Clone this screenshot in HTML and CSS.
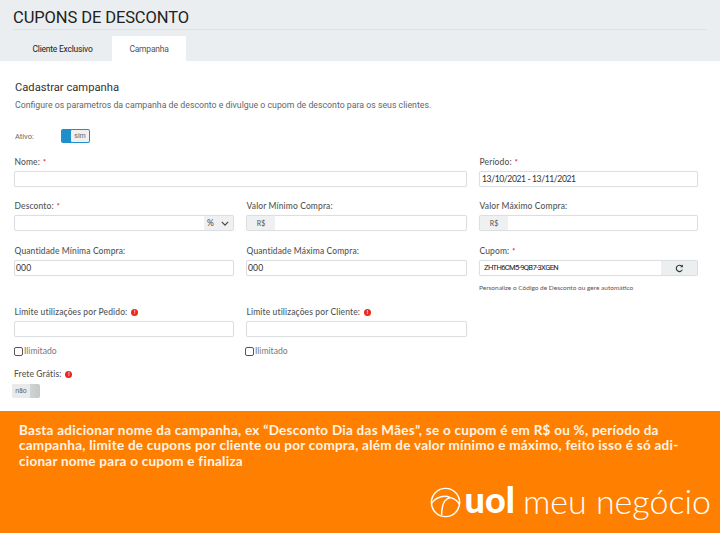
FILE: index.html
```html
<!DOCTYPE html>
<html lang="pt-BR">
<head>
<meta charset="utf-8">
<title>Cupons de Desconto</title>
<link rel="stylesheet" href="styles.css">
</head>
<body>
<header class="top">
  <h1 class="title">CUPONS DE DESCONTO</h1>
  <nav class="tabs">
    <span class="tab">Cliente Exclusivo</span>
    <span class="tab tab-active">Campanha</span>
  </nav>
</header>
<main class="content">
  <h2 class="heading">Cadastrar campanha</h2>
  <p class="lead">Configure os parametros da campanha de desconto e divulgue o cupom de desconto para os seus clientes.</p>
  <div class="active-row">
    <span class="active-label">Ativo:</span>
    <span class="toggle toggle-on"><span class="knob">sim</span></span>
  </div>
  <form class="form">
    <div class="field span2 row-a"><label class="lbl">Nome: <i class="req">*</i></label><div class="box"></div></div>
    <div class="field row-a col3"><label class="lbl">Período: <i class="req">*</i></label><div class="box box-text">13/10/2021 - 13/11/2021</div></div>

    <div class="field row-b"><label class="lbl">Desconto: <i class="req">*</i></label>
      <div class="box box-group"><span class="grow"></span><span class="select">%<svg class="chev" viewBox="0 0 10 6" width="8" height="5"><path d="M1 1l4 4 4-4" fill="none" stroke="#444" stroke-width="1.4"/></svg></span></div></div>
    <div class="field row-b"><label class="lbl">Valor Mínimo Compra:</label><div class="box box-group"><span class="addon">R$</span></div></div>
    <div class="field row-b"><label class="lbl">Valor Máximo Compra:</label><div class="box box-group"><span class="addon">R$</span></div></div>

    <div class="field row-c"><label class="lbl">Quantidade Mínima Compra:</label><div class="box box-text">000</div></div>
    <div class="field row-c"><label class="lbl">Quantidade Máxima Compra:</label><div class="box box-text">000</div></div>
    <div class="field row-c"><label class="lbl">Cupom: <i class="req">*</i></label>
      <div class="box box-group"><span class="grow code">ZHTH6CM5-9QB7-3XGEN</span><span class="refresh"><svg viewBox="0 0 12 12" width="9" height="9"><path d="M9.8 7.5A4.2 4.2 0 1 1 9 3" fill="none" stroke="#333" stroke-width="1.5"/><path d="M10.5 0.8v3.6H7z" fill="#333"/></svg></span></div>
      <p class="hint">Personalize o Código de Desconto ou gere automático</p></div>

    <div class="field row-d"><label class="lbl">Limite utilizações por Pedido: <b class="info">!</b></label><div class="box"></div>
      <label class="check"><span class="cb"></span>Ilimitado</label></div>
    <div class="field row-d"><label class="lbl">Limite utilizações por Cliente: <b class="info">!</b></label><div class="box"></div>
      <label class="check check-shift"><span class="cb"></span>Ilimitado</label></div>
  </form>
  <div class="free">
    <div class="lbl">Frete Grátis: <b class="info">!</b></div>
    <span class="toggle toggle-off"><span class="knob knob-off">não</span></span>
  </div>
</main>
<footer class="banner">
  <p class="banner-text">Basta adicionar nome da campanha, ex “Desconto Dia das Mães”, se o cupom é em R$ ou %, período da<br>campanha, limite de cupons por cliente ou por compra, além de valor mínimo e máximo, feito isso é só adi-<br>cionar nome para o cupom e finaliza</p>
  <div class="logo">
    <svg class="globe" viewBox="0 0 32 32" width="31" height="31"><circle cx="16" cy="16" r="14.6" fill="none" stroke="#fff" stroke-width="1.5"/><path d="M1.6 17C6 10 15 8 21 11c-6 1-9 6-9 18" fill="none" stroke="#fff" stroke-width="1.5"/><path d="M21 11c4 1 8 4 9.4 7" fill="none" stroke="#fff" stroke-width="1.5"/></svg>
    <span class="uol">uol</span><span class="meu">meu negócio</span>
  </div>
</footer>
</body>
</html>
```
FILE: styles.css
```css
* { box-sizing: border-box; }
html, body { margin: 0; padding: 0; }
body { width: 720px; height: 533px; overflow: hidden; background: #fff; font-family: "Lato", sans-serif; color: #555; display: flex; flex-direction: column; }
.top { height: 61px; background: #ebeef0; padding: 0 13px; display: flex; flex-direction: column; }
.title { margin: 0; height: 30px; padding-top: 9px; border-bottom: 1px solid #dfe2e4; font: 400 16.5px/18px "Roboto", sans-serif; color: #222; letter-spacing: -0.1px; }
.tabs { display: flex; margin-top: 6px; height: 25px; }
.tab { width: 99px; display: flex; align-items: center; justify-content: center; font: 400 8.5px "Roboto", sans-serif; letter-spacing: -.22px; color: #222; }
.tab-active { width: 74px; background: #fff; color: #555; }
.content { height: 350px; padding: 20px 14px 0 15px; }
.heading { margin: 0; font: 400 11.2px/14px "Roboto", sans-serif; color: #333; }
.lead { margin: 4px 0 0; font: 400 8.75px/12px "Roboto", sans-serif; color: #666; }
.active-row { display: flex; align-items: center; margin: 17px 0 0 0; height: 15px; }
.active-label { width: 46px; padding-top: 2px; font: 400 7.5px "Roboto", sans-serif; color: #666; }
.toggle { display: flex; width: 29px; height: 14px; border-radius: 2px; align-items: center; }
.toggle-on { background: #1f8fc9; justify-content: flex-end; padding: 1px; }
.knob { width: 18px; height: 12px; background: #eef0f1; font: 400 7px/12px "Roboto", sans-serif; text-align: center; color: #666; border-radius: 1px; }
.toggle-off { width: 28px; height: 14px; margin-left: -2px; background: linear-gradient(90deg, #e8eaea, #c5c8c8); }
.knob-off { background: #e9ebeb; height: 14px; line-height: 14px; }
.form { display: grid; grid-template-columns: 220px 221px 219px; column-gap: 12px; margin: 13px 0 0 -1px; }
.span2 { grid-column: span 2; }
.row-a { height: 44px; }
.row-b { height: 45px; }
.row-c { height: 61px; }
.row-d { height: 62px; }
.field { min-width: 0; }
.lbl { display: flex; align-items: center; gap: 3px; height: 13px; font: 500 8.5px/13px "Lato", sans-serif; color: #555; letter-spacing: .12px; margin-bottom: 2px; padding-left: .5px; }
.req { font: 700 7px/9px "Lato", sans-serif; color: #d9262b; }
.box { height: 16px; background: #fff; border: 1px solid #dcdfe1; border-radius: 2px; width: 100%; box-shadow: 0 0 1px #e5e7e8; }
.box-text { font: 400 8.6px/14px "Lato", sans-serif; color: #333; padding-left: 1px; letter-spacing: .1px; }
.row-a .box-text { padding-left: 2px; letter-spacing: -.4px; }
.box-group { display: flex; }
.grow { flex: 1; }
.select { width: 29px; background: #eef0f1; font: 400 8.5px/14px "Lato", sans-serif; color: #444; padding-left: 3px; display: flex; align-items: center; gap: 7px; }
.addon { width: 28px; background: #eef0f1; font: 400 7px/14px "Lato", sans-serif; color: #555; text-align: center; }
.code { font: 400 7.6px/14px "Roboto", sans-serif; color: #222; padding-left: 4px; letter-spacing: -.65px; }
.refresh { width: 36px; background: #eceff0; display: flex; align-items: center; justify-content: center; }
.hint { margin: 8px 0 0; font: 400 6.5px/8px "Lato", sans-serif; color: #555; }
.info { display: inline-block; width: 7px; height: 7px; border-radius: 50%; background: #e8291c; color: #fff; font: 700 5px/7px "Lato", sans-serif; text-align: center; margin-left: 1px; }
.check { display: flex; align-items: center; gap: 1px; margin: 8px 0 0 0; font: 400 8.6px/12px "Lato", sans-serif; color: #777; height: 12px; }
.check-shift { margin-left: -1px; }
.cb { width: 9px; height: 9px; border: 1px solid #555; border-radius: 2px; background: #fff; }
.free { margin: 0 0 0 -1px; }
.free .lbl { margin: 0 0 3px 0; padding: 0; }
.banner { height: 122px; background: #ff8000; padding: 12px 0 0 19px; position: relative; }
.banner-text { margin: 0; width: 695px; font: 700 13.5px/15.4px "Lato", sans-serif; color: #fff4e6; letter-spacing: .25px; white-space: nowrap; }
.logo { position: absolute; right: 9px; bottom: 13px; display: flex; align-items: center; color: #fff; }
.globe { margin-right: 4px; }
.uol { font: 900 36px/36px "Lato", sans-serif; margin-right: 8px; position: relative; top: -3px; }
.meu { font: 300 34px/36px "Lato", sans-serif; position: relative; top: -1px; }
```
